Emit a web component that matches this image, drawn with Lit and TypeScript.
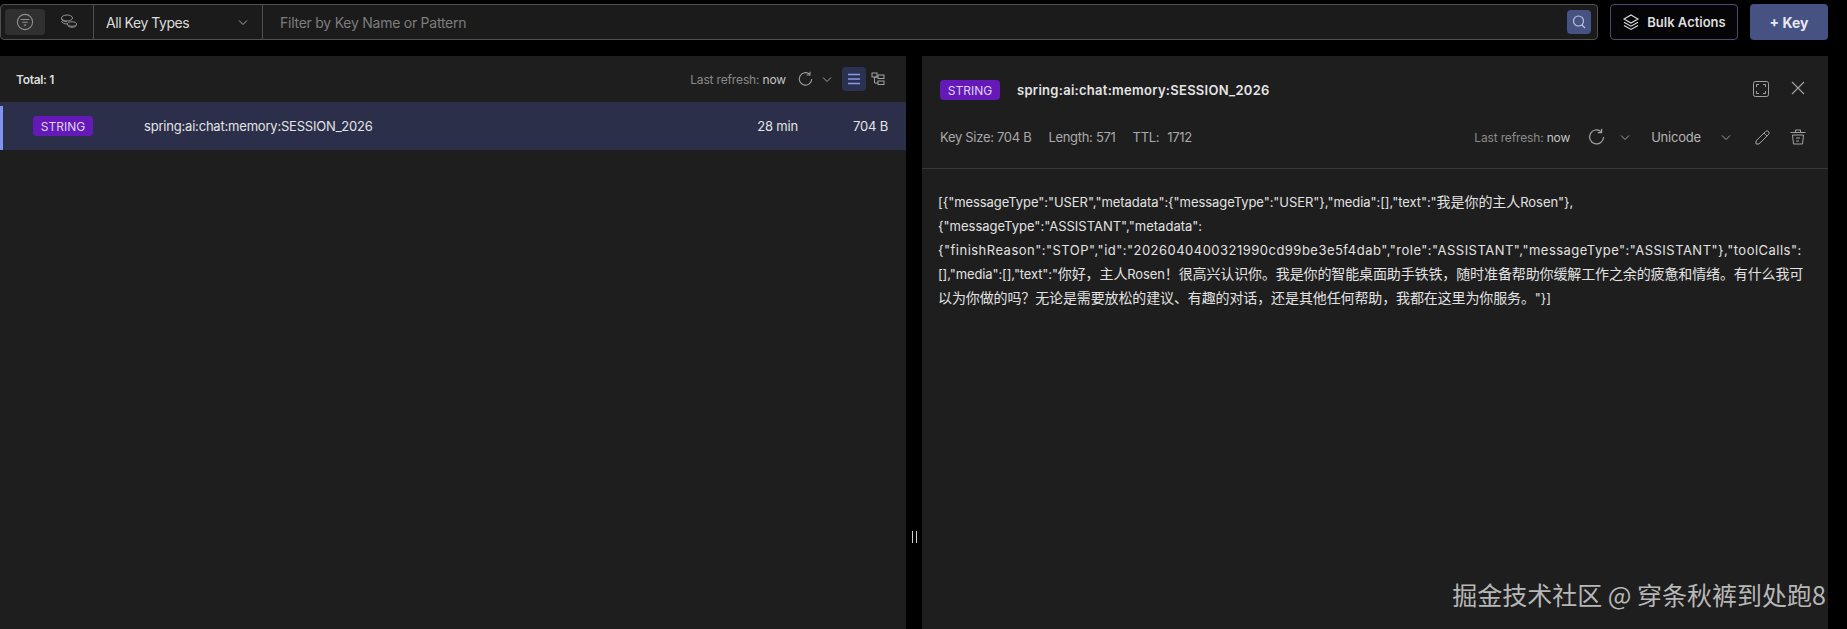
import { LitElement, html, css, svg } from "lit";
import { customElement } from "lit/decorators.js";

const chevron = svg`<path d="M3 5.500 L7 9.500 L11 5.500" fill="none" stroke="currentColor" stroke-width="1"/>`;
const refresh = svg`<path d="M14.200 3.600 A7 7 0 1 0 16.600 9" fill="none" stroke="currentColor" stroke-width="1.200"/><path d="M14.600 0.800 V4.600 H10.800" fill="none" stroke="currentColor" stroke-width="1.200"/>`;

@customElement("app-root")
export class AppRoot extends LitElement {
  static styles = css`
    :host { display: block; width: 1847px; height: 629px; background: #000; overflow: hidden; position: relative;
      font-family: Inter, "Noto Sans CJK SC", sans-serif; color: #e6e6e6; font-size: 13px; letter-spacing: -0.2px; }
    * { box-sizing: border-box; }
    svg { display: block; flex: none; }
    .page { width: 1828px; height: 629px; display: flex; flex-direction: column; padding-top: 4px; }
    .top { display: flex; height: 36px; gap: 12px; }
    .bar { flex: 1; display: flex; border: 1px solid #4f4f4f; border-radius: 4px; background: #1b1b1b; min-width: 0; }
    .tabs { width: 93px; display: flex; align-items: center; padding-left: 4px; border-right: 1px solid #4f4f4f; }
    .tab { width: 40px; height: 26px; border-radius: 4px; display: flex; align-items: center; justify-content: center; color: #8f8f8f; }
    .tab.on { background: #303030; }
    .tab + .tab { margin-left: 4px; }
    .type { width: 169px; display: flex; align-items: center; justify-content: space-between; padding: 0 12px; border-right: 1px solid #4f4f4f; color: #dcdcdc; font-size: 14px; letter-spacing: -0.45px; }
    .type svg { color: #a8a8a8; }
    .filter { flex: 1; display: flex; align-items: center; justify-content: space-between; padding: 0 6px 0 17px; color: #7d7d7d; font-size: 14px; letter-spacing: -0.25px; }
    .sbtn { width: 24px; height: 24px; border-radius: 4px; background: #465282; display: flex; align-items: center; justify-content: center; color: #c2c9e0; }
    .bulk { width: 128px; border: 1px solid #4a4a6c; border-radius: 4px; background: #050507; display: flex; align-items: center; justify-content: center; gap: 7px; font-size: 13px; font-weight: 600; color: #dedede; letter-spacing: 0; }
    .add { width: 78px; border-radius: 4px; background: #465282; display: flex; align-items: center; justify-content: center; font-size: 14px; font-weight: 700; color: #e8eaf2; letter-spacing: 0; }
    .main { flex: 1; display: flex; gap: 16px; margin-top: 16px; min-height: 0; }
    .panel { flex: 1; background: #1e1e1e; min-width: 0; position: relative; }
    .lhead { height: 46px; display: flex; align-items: center; padding: 0 16px; font-size: 12px; font-weight: 600; color: #dcdcdc; letter-spacing: -0.3px; }
    .grow { flex: 1; }
    .refresh { font-size: 12px; font-weight: 400; color: #8a8a8a; letter-spacing: -0.15px; }
    .refresh b { font-weight: 400; color: #c4c4c4; }
    .ic { color: #a2a2a2; }
    .view { width: 24px; height: 24px; border-radius: 4px; display: flex; align-items: center; justify-content: center; color: #a2a2a2; }
    .view.on { background: #2b3150; color: #8a9ae8; }
    .row { height: 48px; background: #2b2f4a; display: flex; align-items: center; padding-left: 33px; padding-right: 18px; position: relative; color: #e4e4e4; }
    .row::before { content: ""; position: absolute; left: 0; top: 4px; bottom: 0; width: 3px; background: #7f93ef; }
    .badge { width: 60px; height: 20px; border-radius: 4px; background: #6419b8; color: #dfd4f2; font-size: 12px; display: flex; align-items: center; justify-content: center; flex: none; letter-spacing: 0; }
    .name { margin-left: 51px; flex: 1; }
    .ttl { width: 54px; text-align: right; margin-right: 36px; }
    .size { width: 54px; text-align: right; }
    .handle { position: absolute; left: -10px; top: 475px; width: 5px; height: 12px; border-left: 1px solid #cfcfcf; border-right: 1px solid #cfcfcf; }
    .rhead { height: 113px; border-bottom: 1px solid #383838; padding: 0 18px; display: flex; flex-direction: column; }
    .l1 { height: 69px; padding-top: 24px; display: flex; align-items: flex-start; }
    .l1 .title { margin-left: 17px; font-weight: 600; line-height: 20px; color: #e4e4e4; letter-spacing: 0.28px; }
    .l2 { display: flex; align-items: center; height: 24px; color: #a9a9a9; }
    .l2 .m { margin-right: 17px; letter-spacing: -0.3px; }
    .l2 .m i { font-style: normal; margin-left: 8px; }
    .enc { color: #b4b4b4; margin-left: 18px; }
    .body { padding: 21px 16px; font-size: 13px; line-height: 24px; color: #e2e2e2; }
    .ln { display: block; white-space: nowrap; }
    .ln.a { letter-spacing: -0.06px; }
    .ln.b { letter-spacing: 0; }
    .ln.c3 { letter-spacing: 0.48px; }
    .ln.d { letter-spacing: -0.12px; }
    .c { font-size: 14px; }
    .mark { position: absolute; right: 2px; top: 522px; font-size: 25px; line-height: 32px; color: #b7b7b7; white-space: nowrap; font-family: "Noto Sans CJK SC", sans-serif; letter-spacing: 0; }
  `;

  render() {
    return html`<div class="page">
      <div class="top">
        <div class="bar">
          <div class="tabs">
            <div class="tab on"><svg width="18" height="18" viewBox="0 0 18 18" fill="none" stroke="currentColor" stroke-width="1.100"><circle cx="9" cy="9" r="7.600"/><path d="M4.600 6.500H13.400M6.200 9.300H11.800M7.800 12.100H10.200"/></svg></div>
            <div class="tab"><svg width="18" height="18" viewBox="0 0 18 18" fill="none" stroke="currentColor" stroke-width="1"><ellipse cx="7" cy="5" rx="5.500" ry="3"/><path d="M1.500 5.500c0 2 2.500 3.200 5.500 3.200M1.500 8c.3 1.800 2.700 3 5.500 3"/><ellipse cx="12" cy="11" rx="4.500" ry="2.200"/><path d="M7.500 11.500c0 1.600 2 2.800 4.500 2.800s4.500-1.200 4.500-2.800"/></svg></div>
          </div>
          <div class="type">All Key Types<svg width="14" height="14" viewBox="0 0 14 14">${chevron}</svg></div>
          <div class="filter">Filter by Key Name or Pattern
            <div class="sbtn"><svg width="16" height="16" viewBox="0 0 16 16" fill="none" stroke="currentColor" stroke-width="1.100"><circle cx="7.500" cy="7" r="5"/><path d="M11 11l3 3"/></svg></div>
          </div>
        </div>
        <div class="bulk"><svg width="18" height="18" viewBox="0 0 18 18" fill="none" stroke="currentColor" stroke-width="1.100"><path d="M9 2l7 4-7 4-7-4z"/><path d="M2 9.200l7 4 7-4M2 12.400l7 4 7-4"/></svg>Bulk Actions</div>
        <div class="add">+ Key</div>
      </div>
      <div class="main">
        <section class="panel">
          <div class="lhead">Total: 1<span class="grow"></span>
            <span class="refresh">Last refresh: <b>now</b></span>
            <svg class="ic" style="margin-left:11px" width="16" height="16" viewBox="0 0 18 18">${refresh}</svg>
            <svg class="ic" style="margin-left:7px;margin-right:8px" width="14" height="14" viewBox="0 0 14 14">${chevron}</svg>
            <div class="view on"><svg width="14" height="14" viewBox="0 0 14 14" stroke="currentColor" stroke-width="1.500"><path d="M1 2.500H13M1 7H13M1 11.500H13"/></svg></div>
            <div class="view"><svg width="14" height="14" viewBox="0 0 14 14" fill="none" stroke="currentColor" stroke-width="1"><rect x="1" y="1" width="5" height="4"/><rect x="7" y="3" width="6" height="3.500"/><rect x="7" y="9" width="6" height="3.500"/><path d="M3.500 5V11H7M3.500 5H7"/></svg></div>
          </div>
          <div class="row"><div class="badge">STRING</div><div class="name">spring:ai:chat:memory:SESSION_2026</div><div class="ttl">28 min</div><div class="size">704 B</div></div>
        </section>
        <section class="panel">
          <div class="handle"></div>
          <div class="rhead">
            <div class="l1"><div class="badge">STRING</div><div class="title">spring:ai:chat:memory:SESSION_2026</div><span class="grow"></span>
              <svg class="ic" style="margin-right:20px" width="18" height="18" viewBox="0 0 18 18" fill="none" stroke="currentColor" stroke-width="1"><rect x="1.500" y="1.500" width="15" height="15" rx="2"/><path d="M4.500 7V4.500H7M11 4.500H13.500V7M13.500 11V13.500H11M7 13.500H4.500V11"/></svg>
              <svg class="ic" style="margin-right:4px" width="16" height="16" viewBox="0 0 16 16" fill="none" stroke="currentColor" stroke-width="1.100"><path d="M2 2L14 14M14 2L2 14"/></svg>
            </div>
            <div class="l2">
              <span class="m">Key Size: 704 B</span><span class="m">Length: 571</span><span class="m">TTL:<i>1712</i></span><span class="grow"></span>
              <span class="refresh">Last refresh: <b>now</b></span>
              <svg class="ic" style="margin-left:17px" width="18" height="18" viewBox="0 0 18 18">${refresh}</svg>
              <svg class="ic" style="margin-left:13px" width="14" height="14" viewBox="0 0 14 14">${chevron}</svg>
              <span class="enc" style="margin-left:19px">Unicode</span>
              <svg class="ic" style="margin-left:18px" width="14" height="14" viewBox="0 0 14 14">${chevron}</svg>
              <svg class="ic" style="margin-left:21px" width="17" height="17" viewBox="0 0 17 17" fill="none" stroke="currentColor" stroke-width="1"><path d="M2 12L11.500 2.500a1.800 1.800 0 0 1 3 3L5 15H2z"/><path d="M10 4l3 3"/></svg>
              <svg class="ic" style="margin-left:18px;margin-right:3px" width="18" height="18" viewBox="0 0 18 18" fill="none" stroke="currentColor" stroke-width="1"><path d="M1.500 4.500H16.500M6.500 4.500V2H11.500V4.500M3.500 7H14.500L13.500 16H4.500zM7 10H11M7 13H10"/></svg>
            </div>
          </div>
          <div class="body">
            <span class="ln a">[{"messageType":"USER","metadata":{"messageType":"USER"},"media":[],"text":"<span class="c">我是你的主人</span>Rosen"},</span>
            <span class="ln b">{"messageType":"ASSISTANT","metadata":</span>
            <span class="ln c3">{"finishReason":"STOP","id":"2026040400321990cd99be3e5f4dab","role":"ASSISTANT","messageType":"ASSISTANT"},"toolCalls":</span>
            <span class="ln d">[],"media":[],"text":"<span class="c">你好，主人</span>Rosen<span class="c">！很高兴认识你。我是你的智能桌面助手铁铁，随时准备帮助你缓解工作之余的疲惫和情绪。有什么我可</span></span>
            <span class="ln d"><span class="c">以为你做的吗？无论是需要放松的建议、有趣的对话，还是其他任何帮助，我都在这里为你服务。</span>"}]</span>
          </div>
          <div class="mark">掘金技术社区 @ 穿条秋裤到处跑8</div>
        </section>
      </div>
    </div>`;
  }
}
